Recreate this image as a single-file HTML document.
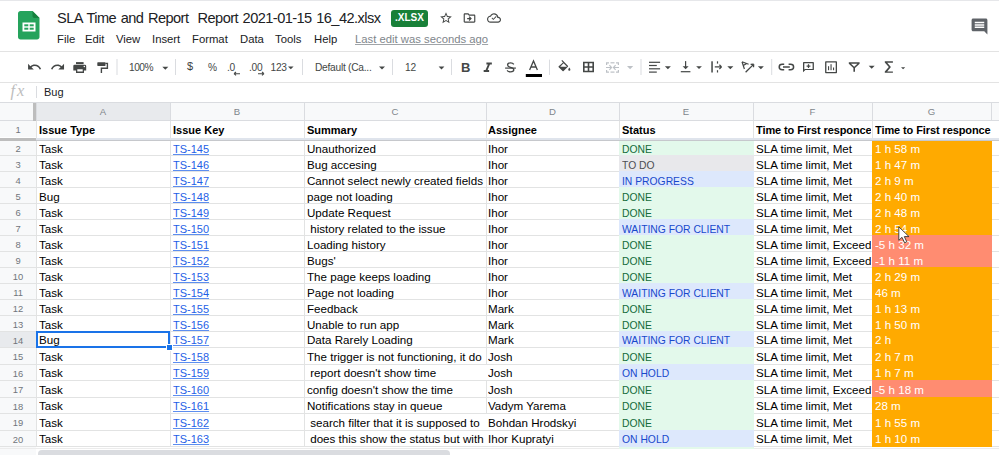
<!DOCTYPE html>
<html><head><meta charset="utf-8">
<style>
*{margin:0;padding:0;box-sizing:border-box}
html,body{width:999px;height:455px;overflow:hidden;background:#fff;font-family:"Liberation Sans",sans-serif;position:relative}
.a{position:absolute}
.title{left:57px;top:10px;font-size:14.6px;color:#202124;white-space:pre;letter-spacing:-0.56px;word-spacing:1.1px}
.menu{top:32.6px;font-size:11.3px;color:#202124;white-space:nowrap}
.ico{position:absolute;fill:#444746}
.tb{position:absolute;font-size:10.2px;color:#444746;white-space:nowrap;letter-spacing:-0.25px}
.sep{position:absolute;top:59px;width:1px;height:17px;background:#dadce0}
.arr{position:absolute;width:0;height:0;border-left:3.5px solid transparent;border-right:3.5px solid transparent;border-top:3.5px solid #444746}
.ch{position:absolute;top:103px;height:18px;font-size:9.6px;line-height:17px;color:#80868b;text-align:center}
.rh{position:absolute;left:0;width:36px;font-size:9.4px;color:#70757a;text-align:center;padding-top:1px}
.hl{position:absolute;left:0;width:999px;height:1px;background:#e2e3e3}
.vl{position:absolute;top:121px;width:1px;height:334px;background:#e2e3e3}
.bg{position:absolute}
.c{position:absolute;font-size:11px;line-height:16px;height:16px;color:#000;white-space:pre;overflow:hidden}
.b{font-weight:bold}
.lk{color:#1f5fe6}
.lk u{text-decoration-thickness:1px;text-underline-offset:0.6px;text-decoration-color:#5d8ef0}
.w{color:#fff}
.st{transform:scaleX(0.915);transform-origin:0 0}
</style></head><body>
<!-- top border -->
<div class="a" style="left:0;top:0;width:999px;height:1px;background:#e6e7ea"></div>
<!-- logo -->
<svg class="a" style="left:18px;top:11px" width="22" height="29" viewBox="0 0 22 29">
 <path d="M2.5 0H14.5L21.5 7V26C21.5 27.4 20.4 28.5 19 28.5H2.5C1.1 28.5 0 27.4 0 26V2.5C0 1.1 1.1 0 2.5 0Z" fill="#25a35c"/>
 <path d="M14.5 0L21.5 7H16.5C15.4 7 14.5 6.1 14.5 5Z" fill="#15803d"/>
 <rect x="4.5" y="11.5" width="13" height="9" fill="#fff"/>
 <rect x="6.3" y="13.3" width="4" height="2" fill="#25a35c"/>
 <rect x="11.7" y="13.3" width="4" height="2" fill="#25a35c"/>
 <rect x="6.3" y="16.7" width="4" height="2" fill="#25a35c"/>
 <rect x="11.7" y="16.7" width="4" height="2" fill="#25a35c"/>
</svg>
<div class="a title">SLA Time and Report  Report 2021-01-15 16_42.xlsx</div>
<div class="a" style="left:391px;top:10px;width:37px;height:16.5px;background:#188038;border-radius:3px;color:#fff;font-size:10px;font-weight:bold;line-height:16.5px;text-align:center">.XLSX</div>
<!-- star -->
<svg class="ico" style="left:439px;top:11px" width="14" height="14" viewBox="0 0 24 24"><path d="M22 9.24l-7.19-.62L12 2 9.19 8.63 2 9.24l5.46 4.73L5.82 21 12 17.27 18.18 21l-1.63-7.03L22 9.24zM12 15.4l-3.76 2.27 1-4.28-3.32-2.88 4.38-.38L12 6.1l1.71 4.04 4.38.38-3.32 2.88 1 4.28L12 15.4z"/></svg>
<!-- move folder -->
<svg class="ico" style="left:462px;top:11px" width="15" height="14" viewBox="0 0 24 24"><path d="M20 6h-8l-2-2H4c-1.1 0-1.99.9-1.99 2L2 18c0 1.1.9 2 2 2h16c1.1 0 2-.9 2-2V8c0-1.1-.9-2-2-2zm0 12H4V6h5.17l2 2H20v10zm-7.84-6H8v2h4.16l-1.59 1.59L11.99 17 16 13.01 11.99 9l-1.41 1.41L12.16 12z"/></svg>
<!-- cloud -->
<svg class="ico" style="left:487px;top:11px" width="14" height="14" viewBox="0 0 24 24"><path d="M19.35 10.04C18.67 6.59 15.64 4 12 4 9.11 4 6.6 5.64 5.35 8.04 2.34 8.36 0 10.91 0 14c0 3.310 2.69 6 6 6h13c2.76 0 5-2.24 5-5 0-2.64-2.05-4.780-4.65-4.96zM19 18H6c-2.21 0-4-1.79-4-4 0-2.05 1.53-3.76 3.56-3.97l1.07-.11.5-.95C8.080 7.140 9.94 6 12 6c2.62 0 4.88 1.86 5.39 4.43l.3 1.5 1.53.11c1.56.1 2.78 1.41 2.78 2.96 0 1.65-1.35 3-3 3zm-8.2-2.6l-3-3 1.1-1.1 1.9 1.9 4.6-4.6 1.1 1.1z"/></svg>
<!-- comment right -->
<svg class="ico" style="left:970px;top:16.5px;fill:#5f6368" width="19" height="19" viewBox="0 0 24 24"><path d="M21.99 4c0-1.1-.89-2-1.99-2H4c-1.1 0-2 .9-2 2v12c0 1.1.9 2 2 2h14l4 4-.01-18zM18 14H6v-2h12v2zm0-3H6V9h12v2zm0-3H6V6h12v2z"/></svg>
<!-- menu -->
<div class="a menu" style="left:57px">File</div>
<div class="a menu" style="left:85px">Edit</div>
<div class="a menu" style="left:116px">View</div>
<div class="a menu" style="left:152px">Insert</div>
<div class="a menu" style="left:192px">Format</div>
<div class="a menu" style="left:240px">Data</div>
<div class="a menu" style="left:275px">Tools</div>
<div class="a menu" style="left:314px">Help</div>
<div class="a menu" style="left:355px;color:#80868b;text-decoration:underline;text-decoration-color:#a0a4a8">Last edit was seconds ago</div>
<!-- header bottom line -->
<div class="a" style="left:0;top:51px;width:999px;height:1px;background:#e3e3e3"></div>
<!-- toolbar -->
<svg class="a" style="left:0;top:52px" width="999" height="30" viewBox="0 52 999 30">
<g fill="#444746">
 <path transform="translate(26.8 59.4) scale(0.638)" d="M12.5 8c-2.65 0-5.05.99-6.9 2.6L2 7v9h9l-3.62-3.62c1.39-1.16 3.16-1.88 5.12-1.88 3.54 0 6.55 2.31 7.6 5.5l2.37-.78C21.08 11.03 17.15 8 12.5 8z"/>
 <path transform="translate(50 59.4) scale(0.638)" d="M18.4 10.6C16.55 8.99 14.15 8 11.5 8c-4.65 0-8.58 3.03-9.96 7.22L3.9 16c1.05-3.19 4.05-5.5 7.6-5.5 1.95 0 3.73.72 5.12 1.88L13 16h9V7l-3.6 3.6z"/>
 <!-- print -->
 <rect x="76" y="62.1" width="7.6" height="2"/>
 <path d="M74.6 64.8H84.9Q86.2 64.8 86.2 66.1V70.5H84V72.9H76V70.5H73.3V66.1Q73.3 64.8 74.6 64.8ZM77.3 69.3V71.5H82.7V69.3Z"/>
 <circle cx="84.3" cy="66.6" r="0.75" fill="#fff"/>
 <!-- paint roller -->
 <rect x="97.3" y="62.3" width="8.2" height="3.6" rx="0.6"/>
 <path d="M105.3 63.4H107.4V68.2H101.4V72.9" fill="none" stroke="#444746" stroke-width="1.4"/>
 <!-- $ -->
 <!-- .0 arrow -->
 <path d="M234 73.7H240M234 73.7L236 72M234 73.7L236 75.4" stroke="#444746" stroke-width="1.1" fill="none"/>
 <path d="M258 73.7H264M264 73.7L262 72M264 73.7L262 75.4" stroke="#444746" stroke-width="1.1" fill="none"/>
 <!-- dropdown arrows -->
 <path d="M162.3 66.7H168.3L165.3 69.7Z"/>
 <path d="M288 66.4H293.6L290.8 69.2Z"/>
 <path d="M379 66.5H385L382 69.5Z"/>
 <path d="M438.6 66.5H444.4L441.5 69.5Z"/>
 <path transform="translate(479.6 59.8) scale(0.68)" d="M10 4v3h2.21l-3.42 8H6v3h8v-3h-2.21l3.42-8H18V4z"/>
 <!-- strikethrough S -->
 <path d="M513.8 64.3C513.1 63.3 512 62.9 510.6 62.9C508.8 62.9 507.6 63.8 507.6 65C507.6 66.2 508.6 66.8 510.6 67.3C512.7 67.8 513.8 68.5 513.8 69.8C513.8 71.2 512.5 71.9 510.6 71.9C509 71.9 507.8 71.3 507.1 70.3" fill="none" stroke="#444746" stroke-width="1.3"/>
 <rect x="505.1" y="67.5" width="10.8" height="1.2"/>
 <!-- A -->
 <path d="M529.6 70.1L533.5 60.9L537.4 70.1M531 67H536" fill="none" stroke="#444746" stroke-width="1.3"/>
 <rect x="525.8" y="74" width="16.2" height="3" fill="#000"/>
 <!-- paint bucket -->
 <path d="M562.2 60L561.4 60.8L563 62.4L558.7 66.3Q558.2 66.8 558.7 67.3L562.6 71Q563.1 71.5 563.6 71L567.9 66.8Q568.4 66.3 567.9 65.8Z M560.2 66.8L563.6 63.2L567 66.8Z"/>
 <path d="M569.4 67.5Q568.2 69 568.2 69.7Q568.2 70.7 569.4 70.7Q570.4 70.7 570.4 69.7Q570.4 69 569.4 67.5Z"/>
 <!-- borders -->
 <path d="M583 61.7H594V72.3H583ZM584.6 63.3V66.2H587.7V63.3ZM589.3 63.3V66.2H592.4V63.3ZM584.6 67.8V70.7H587.7V67.8ZM589.3 67.8V70.7H592.4V67.8Z" fill-rule="evenodd"/>
 <!-- merge (disabled) -->
 <g fill="#bdc1c6">
  <path d="M606 62.2H609V63.4H607.2V65H606ZM616 62.2H619V65H617.8V63.4H616ZM606 69.9H607.2V71.5H609V72.7H606ZM617.8 69.9H619V72.7H616V71.5H617.8Z"/>
  <rect x="610.5" y="62.2" width="4" height="1.2"/><rect x="610.5" y="71.5" width="4" height="1.2"/>
  <path d="M606 66.9H610.3L609 65.6L609.8 64.8L612.4 67.5L609.8 70.2L609 69.4L610.3 68.1H606Z"/>
  <path d="M619 66.9H614.7L616 65.6L615.2 64.8L612.6 67.5L615.2 70.2L616 69.4L614.7 68.1H619Z"/>
  <path d="M627 66.1H633.2L630.1 69.2Z"/>
 </g>
 <!-- align left -->
 <rect x="649" y="61.7" width="11.1" height="1.2"/>
 <rect x="649" y="64.9" width="7.8" height="1.2"/>
 <rect x="649" y="68.2" width="11.1" height="1.2"/>
 <rect x="649" y="71.5" width="7.8" height="1.2"/>
 <path d="M664.9 66.2H670.9L667.9 69.2Z"/>
 <!-- valign bottom -->
 <rect x="685" y="61.1" width="1.2" height="6"/>
 <path d="M682.6 66.2H688.6L685.6 69.2Z"/>
 <rect x="680.8" y="71.1" width="9.6" height="1.2"/>
 <path d="M696.2 66.2H701.9L699 69.1Z"/>
 <!-- wrap -->
 <rect x="711.3" y="61.3" width="1.5" height="11.2"/>
 <rect x="716.9" y="61.3" width="1.2" height="2.3"/><rect x="716.9" y="70.2" width="1.2" height="2.3"/>
 <path d="M714.8 66.9H721.2M721.6 66.9L719.4 64.8M721.6 66.9L719.4 69" fill="none" stroke="#444746" stroke-width="1.2"/>
 <path d="M727.3 66.2H733.4L730.3 69.2Z"/>
 <!-- text rotation -->
 <path d="M742 61.8L748.6 64.2M742 61.8L744.4 69M743.3 65.6L746.6 63.4" fill="none" stroke="#444746" stroke-width="1.2"/>
 <path d="M745.6 72.3L753.3 64.6M753.7 64.1L750.6 64.3M753.7 64.1L753.5 67.2" fill="none" stroke="#444746" stroke-width="1.3"/>
 <path d="M757.9 66.2H763.9L760.9 69.2Z"/>
 <!-- link -->
 <path d="M784.2 64.3H782.2Q779.2 64.3 779.2 67Q779.2 69.7 782.2 69.7H784.2M788.6 64.3H790.6Q793.6 64.3 793.6 67Q793.6 69.7 790.6 69.7H788.6M783 67H789.8" fill="none" stroke="#444746" stroke-width="1.5"/>
 <!-- add comment -->
 <path d="M803.7 62H813.2Q813.9 62 813.9 62.7V69.4Q813.9 70.1 813.2 70.1H805.4L803 72.3V62.7Q803 62 803.7 62ZM804.3 63.3V69.5L804.9 68.9H812.6V63.3Z" fill-rule="evenodd"/>
 <path d="M807.9 64.2H809.1V65.5H810.4V66.7H809.1V68H807.9V66.7H806.6V65.5H807.9Z"/>
 <!-- chart -->
 <path d="M825.8 61.3H836.3Q837 61.3 837 62V72.5Q837 73.2 836.3 73.2H825.8Q825.1 73.2 825.1 72.5V62Q825.1 61.3 825.8 61.3ZM826.4 62.6V71.9H835.7V62.6Z" fill-rule="evenodd"/>
 <rect x="828" y="66.2" width="1.1" height="4"/><rect x="830.5" y="64.2" width="1.1" height="6"/><rect x="833" y="67.5" width="1.1" height="2.7"/>
 <!-- filter -->
 <path d="M848.8 62.3H859.6V63.8L855 68V71.8H853.4V68L848.8 63.8ZM851 63.8L854.2 66.7L857.4 63.8Z" fill-rule="evenodd"/>
 <path d="M868.7 65.8H874.7L871.7 68.8Z"/>
 <!-- sigma -->
 <path d="M884.8 61.3H892.9V62.7H887.2L890.9 67L887.2 71.4H892.9V72.8H884.8V71.6L888.8 67L884.8 62.5Z"/>
 <path d="M901 67.2H905.2L903.1 69.3Z"/>
</g>
<g fill="#dadce0">
 <rect x="116.5" y="59" width="1" height="16"/>
 <rect x="175" y="59" width="1" height="16"/>
 <rect x="302" y="59" width="1" height="16"/>
 <rect x="392" y="59" width="1" height="16"/>
 <rect x="451" y="59" width="1" height="16"/>
 <rect x="549" y="59.6" width="1" height="15.3"/>
 <rect x="640.5" y="59" width="1" height="16"/>
 <rect x="771.2" y="59" width="1" height="16"/>
</g>
</svg>
<div class="tb" style="left:129px;top:61.6px;letter-spacing:-0.5px">100%</div>
<div class="tb" style="left:187px;top:60px;font-size:11px;color:#3c4043">$</div>
<div class="tb" style="left:208px;top:61.6px">%</div>
<div class="tb" style="left:227px;top:61.6px">.0</div>
<div class="tb" style="left:249px;top:61.6px">.00</div>
<div class="tb" style="left:270.5px;top:61.6px">123</div>
<div class="tb" style="left:315px;top:61.6px">Default (Ca...</div>
<div class="tb" style="left:405px;top:61.6px">12</div>
<div class="tb" style="left:461px;top:59.5px;font-weight:bold;font-size:13px">B</div>

<div class="a" style="left:0;top:82px;width:999px;height:1px;background:#e3e3e3"></div>
<!-- formula bar -->
<div class="a" style="left:10.5px;top:80.5px;font-family:'Liberation Serif',serif;font-style:italic;font-size:16.5px;letter-spacing:1.8px;color:#bdbdbd">fx</div>
<div class="a" style="left:36px;top:86px;width:1px;height:12px;background:#dadce0"></div>
<div class="a" style="left:44px;top:86px;font-size:11px;color:#202124">Bug</div>
<div class="a" style="left:0;top:102px;width:999px;height:1px;background:#dadce0"></div>
<!-- grid -->
<div class="a" style="left:0;top:103px;width:33px;height:18px;background:#f8f9fa"></div>
<div class="ch" style="left:36px;width:134px;background:#e8eaed">A</div>
<div class="ch" style="left:170px;width:134px;background:#f8f9fa">B</div>
<div class="ch" style="left:304px;width:182px;background:#f8f9fa">C</div>
<div class="ch" style="left:486px;width:133px;background:#f8f9fa">D</div>
<div class="ch" style="left:619px;width:134px;background:#f8f9fa">E</div>
<div class="ch" style="left:753px;width:119px;background:#f8f9fa">F</div>
<div class="ch" style="left:872px;width:119px;background:#f8f9fa">G</div>
<div class="ch" style="left:991px;width:40px;background:#f8f9fa"></div>
<div class="hl" style="top:155px"></div>
<div class="hl" style="top:171px"></div>
<div class="hl" style="top:187px"></div>
<div class="hl" style="top:203px"></div>
<div class="hl" style="top:219px"></div>
<div class="hl" style="top:235px"></div>
<div class="hl" style="top:251px"></div>
<div class="hl" style="top:267px"></div>
<div class="hl" style="top:283px"></div>
<div class="hl" style="top:299px"></div>
<div class="hl" style="top:315px"></div>
<div class="hl" style="top:331px"></div>
<div class="hl" style="top:347px"></div>
<div class="hl" style="top:364px"></div>
<div class="hl" style="top:380px"></div>
<div class="hl" style="top:397px"></div>
<div class="hl" style="top:413px"></div>
<div class="hl" style="top:430px"></div>
<div class="hl" style="top:446px"></div>
<div class="vl" style="left:36px"></div>
<div class="a" style="left:36px;top:103px;width:1px;height:18px;background:#dadce0"></div>
<div class="vl" style="left:170px"></div>
<div class="a" style="left:170px;top:103px;width:1px;height:18px;background:#dadce0"></div>
<div class="vl" style="left:304px"></div>
<div class="a" style="left:304px;top:103px;width:1px;height:18px;background:#dadce0"></div>
<div class="vl" style="left:486px;top:121px;height:244px"></div>
<div class="vl" style="left:486px;top:380px;height:34px"></div>
<div class="vl" style="left:486px;top:446px;height:10px"></div>
<div class="a" style="left:486px;top:103px;width:1px;height:18px;background:#dadce0"></div>
<div class="vl" style="left:619px"></div>
<div class="a" style="left:619px;top:103px;width:1px;height:18px;background:#dadce0"></div>
<div class="vl" style="left:753px"></div>
<div class="a" style="left:753px;top:103px;width:1px;height:18px;background:#dadce0"></div>
<div class="vl" style="left:872px"></div>
<div class="a" style="left:872px;top:103px;width:1px;height:18px;background:#dadce0"></div>
<div class="vl" style="left:991px;top:140px;height:315px"></div>
<div class="a" style="left:991px;top:103px;width:1px;height:18px;background:#dadce0"></div>
<div class="bg" style="left:619px;top:139px;width:135px;height:17px;background:#e3f9eb"></div>
<div class="bg" style="left:872px;top:139px;width:120px;height:17px;background:#ffaa00"></div>
<div class="bg" style="left:619px;top:155px;width:135px;height:17px;background:#e8e8eb"></div>
<div class="bg" style="left:872px;top:155px;width:120px;height:17px;background:#ffaa00"></div>
<div class="bg" style="left:619px;top:171px;width:135px;height:17px;background:#dde8fc"></div>
<div class="bg" style="left:872px;top:171px;width:120px;height:17px;background:#ffaa00"></div>
<div class="bg" style="left:619px;top:187px;width:135px;height:17px;background:#e3f9eb"></div>
<div class="bg" style="left:872px;top:187px;width:120px;height:17px;background:#ffaa00"></div>
<div class="bg" style="left:619px;top:203px;width:135px;height:17px;background:#e3f9eb"></div>
<div class="bg" style="left:872px;top:203px;width:120px;height:17px;background:#ffaa00"></div>
<div class="bg" style="left:619px;top:219px;width:135px;height:17px;background:#dde8fc"></div>
<div class="bg" style="left:872px;top:219px;width:120px;height:17px;background:#ffaa00"></div>
<div class="bg" style="left:619px;top:235px;width:135px;height:17px;background:#e3f9eb"></div>
<div class="bg" style="left:872px;top:235px;width:120px;height:17px;background:#ff8c71"></div>
<div class="bg" style="left:619px;top:251px;width:135px;height:17px;background:#e3f9eb"></div>
<div class="bg" style="left:872px;top:251px;width:120px;height:17px;background:#ff8c71"></div>
<div class="bg" style="left:619px;top:267px;width:135px;height:17px;background:#e3f9eb"></div>
<div class="bg" style="left:872px;top:267px;width:120px;height:17px;background:#ffaa00"></div>
<div class="bg" style="left:619px;top:283px;width:135px;height:17px;background:#dde8fc"></div>
<div class="bg" style="left:872px;top:283px;width:120px;height:17px;background:#ffaa00"></div>
<div class="bg" style="left:619px;top:299px;width:135px;height:17px;background:#e3f9eb"></div>
<div class="bg" style="left:872px;top:299px;width:120px;height:17px;background:#ffaa00"></div>
<div class="bg" style="left:619px;top:315px;width:135px;height:17px;background:#e3f9eb"></div>
<div class="bg" style="left:872px;top:315px;width:120px;height:17px;background:#ffaa00"></div>
<div class="bg" style="left:619px;top:331px;width:135px;height:17px;background:#dde8fc"></div>
<div class="bg" style="left:872px;top:331px;width:120px;height:17px;background:#ffaa00"></div>
<div class="bg" style="left:619px;top:347px;width:135px;height:18px;background:#e3f9eb"></div>
<div class="bg" style="left:872px;top:347px;width:120px;height:18px;background:#ffaa00"></div>
<div class="bg" style="left:619px;top:364px;width:135px;height:17px;background:#dde8fc"></div>
<div class="bg" style="left:872px;top:364px;width:120px;height:17px;background:#ffaa00"></div>
<div class="bg" style="left:619px;top:380px;width:135px;height:18px;background:#e3f9eb"></div>
<div class="bg" style="left:872px;top:380px;width:120px;height:18px;background:#ff8c71"></div>
<div class="bg" style="left:619px;top:397px;width:135px;height:17px;background:#e3f9eb"></div>
<div class="bg" style="left:872px;top:397px;width:120px;height:17px;background:#ffaa00"></div>
<div class="bg" style="left:619px;top:413px;width:135px;height:18px;background:#e3f9eb"></div>
<div class="bg" style="left:872px;top:413px;width:120px;height:18px;background:#ffaa00"></div>
<div class="bg" style="left:619px;top:430px;width:135px;height:17px;background:#dde8fc"></div>
<div class="bg" style="left:872px;top:430px;width:120px;height:17px;background:#ffaa00"></div>
<div class="rh" style="top:121px;height:16px;line-height:16px;background:#f8f9fa">1</div>
<div class="rh" style="top:140px;height:15px;line-height:15px;background:#f8f9fa">2</div>
<div class="rh" style="top:156px;height:15px;line-height:15px;background:#f8f9fa">3</div>
<div class="rh" style="top:172px;height:15px;line-height:15px;background:#f8f9fa">4</div>
<div class="rh" style="top:188px;height:15px;line-height:15px;background:#f8f9fa">5</div>
<div class="rh" style="top:204px;height:15px;line-height:15px;background:#f8f9fa">6</div>
<div class="rh" style="top:220px;height:15px;line-height:15px;background:#f8f9fa">7</div>
<div class="rh" style="top:236px;height:15px;line-height:15px;background:#f8f9fa">8</div>
<div class="rh" style="top:252px;height:15px;line-height:15px;background:#f8f9fa">9</div>
<div class="rh" style="top:268px;height:15px;line-height:15px;background:#f8f9fa">10</div>
<div class="rh" style="top:284px;height:15px;line-height:15px;background:#f8f9fa">11</div>
<div class="rh" style="top:300px;height:15px;line-height:15px;background:#f8f9fa">12</div>
<div class="rh" style="top:316px;height:15px;line-height:15px;background:#f8f9fa">13</div>
<div class="rh" style="top:332px;height:15px;line-height:15px;background:#e8eaed">14</div>
<div class="rh" style="top:348px;height:16px;line-height:16px;background:#f8f9fa">15</div>
<div class="rh" style="top:365px;height:15px;line-height:15px;background:#f8f9fa">16</div>
<div class="rh" style="top:381px;height:16px;line-height:16px;background:#f8f9fa">17</div>
<div class="rh" style="top:398px;height:15px;line-height:15px;background:#f8f9fa">18</div>
<div class="rh" style="top:414px;height:16px;line-height:16px;background:#f8f9fa">19</div>
<div class="rh" style="top:431px;height:15px;line-height:15px;background:#f8f9fa">20</div>
<div class="c b" style="left:39px;top:122.19px;width:130px;font-size:11px;">Issue Type</div>
<div class="c b" style="left:173px;top:122.19px;width:130px;font-size:11px;">Issue Key</div>
<div class="c b" style="left:307px;top:122.19px;width:178px;font-size:11px;">Summary</div>
<div class="c b" style="left:488px;top:122.19px;width:130px;font-size:11px;">Assignee</div>
<div class="c b" style="left:622px;top:122.19px;width:130px;font-size:11px;">Status</div>
<div class="c b" style="left:756px;top:122.19px;width:115px;font-size:11px;letter-spacing:-0.1px">Time to First responce</div>
<div class="c b" style="left:875px;top:122.19px;width:164px;font-size:11px;letter-spacing:-0.1px">Time to First responce</div>
<div class="c" style="left:39px;top:141.48px;width:130px;font-size:11.6px;">Task</div>
<div class="c lk" style="left:173px;top:141.19px;width:130px;font-size:11px;"><u>TS-145</u></div>
<div class="c" style="left:307px;top:141.48px;width:178px;font-size:11.6px;">Unauthorized</div>
<div class="c" style="left:488px;top:141.48px;width:130px;font-size:11.6px;">Ihor</div>
<div class="c st" style="left:622px;top:141.28px;width:130px;font-size:11.3px;color:#136b3b">DONE</div>
<div class="c" style="left:756px;top:141.48px;width:115px;font-size:11.6px;">SLA time limit, Met</div>
<div class="c w" style="left:875px;top:141.48px;width:164px;font-size:11.6px;">1 h 58 m</div>
<div class="c" style="left:39px;top:157.48px;width:130px;font-size:11.6px;">Task</div>
<div class="c lk" style="left:173px;top:157.19px;width:130px;font-size:11px;"><u>TS-146</u></div>
<div class="c" style="left:307px;top:157.48px;width:178px;font-size:11.6px;">Bug accesing</div>
<div class="c" style="left:488px;top:157.48px;width:130px;font-size:11.6px;">Ihor</div>
<div class="c st" style="left:622px;top:157.28px;width:130px;font-size:11.3px;color:#4d4f53">TO DO</div>
<div class="c" style="left:756px;top:157.48px;width:115px;font-size:11.6px;">SLA time limit, Met</div>
<div class="c w" style="left:875px;top:157.48px;width:164px;font-size:11.6px;">1 h 47 m</div>
<div class="c" style="left:39px;top:173.48px;width:130px;font-size:11.6px;">Task</div>
<div class="c lk" style="left:173px;top:173.19px;width:130px;font-size:11px;"><u>TS-147</u></div>
<div class="c" style="left:307px;top:173.48px;width:178px;font-size:11.6px;">Cannot select newly created fields</div>
<div class="c" style="left:488px;top:173.48px;width:130px;font-size:11.6px;">Ihor</div>
<div class="c st" style="left:622px;top:173.28px;width:130px;font-size:11.3px;color:#1848cc">IN PROGRESS</div>
<div class="c" style="left:756px;top:173.48px;width:115px;font-size:11.6px;">SLA time limit, Met</div>
<div class="c w" style="left:875px;top:173.48px;width:164px;font-size:11.6px;">2 h 9 m</div>
<div class="c" style="left:39px;top:189.48px;width:130px;font-size:11.6px;">Bug</div>
<div class="c lk" style="left:173px;top:189.19px;width:130px;font-size:11px;"><u>TS-148</u></div>
<div class="c" style="left:307px;top:189.48px;width:178px;font-size:11.6px;">page not loading</div>
<div class="c" style="left:488px;top:189.48px;width:130px;font-size:11.6px;">Ihor</div>
<div class="c st" style="left:622px;top:189.28px;width:130px;font-size:11.3px;color:#136b3b">DONE</div>
<div class="c" style="left:756px;top:189.48px;width:115px;font-size:11.6px;">SLA time limit, Met</div>
<div class="c w" style="left:875px;top:189.48px;width:164px;font-size:11.6px;">2 h 40 m</div>
<div class="c" style="left:39px;top:205.48px;width:130px;font-size:11.6px;">Task</div>
<div class="c lk" style="left:173px;top:205.19px;width:130px;font-size:11px;"><u>TS-149</u></div>
<div class="c" style="left:307px;top:205.48px;width:178px;font-size:11.6px;">Update Request</div>
<div class="c" style="left:488px;top:205.48px;width:130px;font-size:11.6px;">Ihor</div>
<div class="c st" style="left:622px;top:205.28px;width:130px;font-size:11.3px;color:#136b3b">DONE</div>
<div class="c" style="left:756px;top:205.48px;width:115px;font-size:11.6px;">SLA time limit, Met</div>
<div class="c w" style="left:875px;top:205.48px;width:164px;font-size:11.6px;">2 h 48 m</div>
<div class="c" style="left:39px;top:221.48px;width:130px;font-size:11.6px;">Task</div>
<div class="c lk" style="left:173px;top:221.19px;width:130px;font-size:11px;"><u>TS-150</u></div>
<div class="c" style="left:307px;top:221.48px;width:178px;font-size:11.6px;">&nbsp;history related to the issue</div>
<div class="c" style="left:488px;top:221.48px;width:130px;font-size:11.6px;">Ihor</div>
<div class="c st" style="left:622px;top:221.28px;width:130px;font-size:11.3px;color:#1848cc">WAITING FOR CLIENT</div>
<div class="c" style="left:756px;top:221.48px;width:115px;font-size:11.6px;">SLA time limit, Met</div>
<div class="c w" style="left:875px;top:221.48px;width:164px;font-size:11.6px;">2 h 54 m</div>
<div class="c" style="left:39px;top:237.48px;width:130px;font-size:11.6px;">Task</div>
<div class="c lk" style="left:173px;top:237.19px;width:130px;font-size:11px;"><u>TS-151</u></div>
<div class="c" style="left:307px;top:237.48px;width:178px;font-size:11.6px;">Loading history</div>
<div class="c" style="left:488px;top:237.48px;width:130px;font-size:11.6px;">Ihor</div>
<div class="c st" style="left:622px;top:237.28px;width:130px;font-size:11.3px;color:#136b3b">DONE</div>
<div class="c" style="left:756px;top:237.48px;width:115px;font-size:11.6px;">SLA time limit, Exceeded</div>
<div class="c w" style="left:875px;top:237.48px;width:164px;font-size:11.6px;">-5 h 32 m</div>
<div class="c" style="left:39px;top:253.48px;width:130px;font-size:11.6px;">Task</div>
<div class="c lk" style="left:173px;top:253.19px;width:130px;font-size:11px;"><u>TS-152</u></div>
<div class="c" style="left:307px;top:253.48px;width:178px;font-size:11.6px;">Bugs'</div>
<div class="c" style="left:488px;top:253.48px;width:130px;font-size:11.6px;">Ihor</div>
<div class="c st" style="left:622px;top:253.28px;width:130px;font-size:11.3px;color:#136b3b">DONE</div>
<div class="c" style="left:756px;top:253.48px;width:115px;font-size:11.6px;">SLA time limit, Exceeded</div>
<div class="c w" style="left:875px;top:253.48px;width:164px;font-size:11.6px;">-1 h 11 m</div>
<div class="c" style="left:39px;top:269.48px;width:130px;font-size:11.6px;">Task</div>
<div class="c lk" style="left:173px;top:269.19px;width:130px;font-size:11px;"><u>TS-153</u></div>
<div class="c" style="left:307px;top:269.48px;width:178px;font-size:11.6px;">The page keeps loading</div>
<div class="c" style="left:488px;top:269.48px;width:130px;font-size:11.6px;">Ihor</div>
<div class="c st" style="left:622px;top:269.28px;width:130px;font-size:11.3px;color:#136b3b">DONE</div>
<div class="c" style="left:756px;top:269.48px;width:115px;font-size:11.6px;">SLA time limit, Met</div>
<div class="c w" style="left:875px;top:269.48px;width:164px;font-size:11.6px;">2 h 29 m</div>
<div class="c" style="left:39px;top:285.48px;width:130px;font-size:11.6px;">Task</div>
<div class="c lk" style="left:173px;top:285.19px;width:130px;font-size:11px;"><u>TS-154</u></div>
<div class="c" style="left:307px;top:285.48px;width:178px;font-size:11.6px;">Page not loading</div>
<div class="c" style="left:488px;top:285.48px;width:130px;font-size:11.6px;">Ihor</div>
<div class="c st" style="left:622px;top:285.28px;width:130px;font-size:11.3px;color:#1848cc">WAITING FOR CLIENT</div>
<div class="c" style="left:756px;top:285.48px;width:115px;font-size:11.6px;">SLA time limit, Met</div>
<div class="c w" style="left:875px;top:285.48px;width:164px;font-size:11.6px;">46 m</div>
<div class="c" style="left:39px;top:301.48px;width:130px;font-size:11.6px;">Task</div>
<div class="c lk" style="left:173px;top:301.19px;width:130px;font-size:11px;"><u>TS-155</u></div>
<div class="c" style="left:307px;top:301.48px;width:178px;font-size:11.6px;">Feedback</div>
<div class="c" style="left:488px;top:301.48px;width:130px;font-size:11.6px;">Mark</div>
<div class="c st" style="left:622px;top:301.28px;width:130px;font-size:11.3px;color:#136b3b">DONE</div>
<div class="c" style="left:756px;top:301.48px;width:115px;font-size:11.6px;">SLA time limit, Met</div>
<div class="c w" style="left:875px;top:301.48px;width:164px;font-size:11.6px;">1 h 13 m</div>
<div class="c" style="left:39px;top:317.48px;width:130px;font-size:11.6px;">Task</div>
<div class="c lk" style="left:173px;top:317.19px;width:130px;font-size:11px;"><u>TS-156</u></div>
<div class="c" style="left:307px;top:317.48px;width:178px;font-size:11.6px;">Unable to run app</div>
<div class="c" style="left:488px;top:317.48px;width:130px;font-size:11.6px;">Mark</div>
<div class="c st" style="left:622px;top:317.28px;width:130px;font-size:11.3px;color:#136b3b">DONE</div>
<div class="c" style="left:756px;top:317.48px;width:115px;font-size:11.6px;">SLA time limit, Met</div>
<div class="c w" style="left:875px;top:317.48px;width:164px;font-size:11.6px;">1 h 50 m</div>
<div class="c" style="left:39px;top:332.48px;width:130px;font-size:11.6px;">Bug</div>
<div class="c lk" style="left:173px;top:332.19px;width:130px;font-size:11px;"><u>TS-157</u></div>
<div class="c" style="left:307px;top:332.48px;width:178px;font-size:11.6px;">Data Rarely Loading</div>
<div class="c" style="left:488px;top:332.48px;width:130px;font-size:11.6px;">Mark</div>
<div class="c st" style="left:622px;top:332.28px;width:130px;font-size:11.3px;color:#1848cc">WAITING FOR CLIENT</div>
<div class="c" style="left:756px;top:332.48px;width:115px;font-size:11.6px;">SLA time limit, Met</div>
<div class="c w" style="left:875px;top:332.48px;width:164px;font-size:11.6px;">2 h</div>
<div class="c" style="left:39px;top:349.48px;width:130px;font-size:11.6px;">Task</div>
<div class="c lk" style="left:173px;top:349.19px;width:130px;font-size:11px;"><u>TS-158</u></div>
<div class="c" style="left:307px;top:349.48px;width:178px;font-size:11.6px;">The trigger is not functioning, it do</div>
<div class="c" style="left:488px;top:349.48px;width:130px;font-size:11.6px;">Josh</div>
<div class="c st" style="left:622px;top:349.28px;width:130px;font-size:11.3px;color:#136b3b">DONE</div>
<div class="c" style="left:756px;top:349.48px;width:115px;font-size:11.6px;">SLA time limit, Met</div>
<div class="c w" style="left:875px;top:349.48px;width:164px;font-size:11.6px;">2 h 7 m</div>
<div class="c" style="left:39px;top:365.48px;width:130px;font-size:11.6px;">Task</div>
<div class="c lk" style="left:173px;top:365.19px;width:130px;font-size:11px;"><u>TS-159</u></div>
<div class="c" style="left:307px;top:365.48px;width:178px;font-size:11.6px;">&nbsp;report doesn't show time</div>
<div class="c" style="left:488px;top:365.48px;width:130px;font-size:11.6px;">Josh</div>
<div class="c st" style="left:622px;top:365.28px;width:130px;font-size:11.3px;color:#1848cc">ON HOLD</div>
<div class="c" style="left:756px;top:365.48px;width:115px;font-size:11.6px;">SLA time limit, Met</div>
<div class="c w" style="left:875px;top:365.48px;width:164px;font-size:11.6px;">1 h 7 m</div>
<div class="c" style="left:39px;top:382.48px;width:130px;font-size:11.6px;">Task</div>
<div class="c lk" style="left:173px;top:382.19px;width:130px;font-size:11px;"><u>TS-160</u></div>
<div class="c" style="left:307px;top:382.48px;width:178px;font-size:11.6px;">config doesn't show the time</div>
<div class="c" style="left:488px;top:382.48px;width:130px;font-size:11.6px;">Josh</div>
<div class="c st" style="left:622px;top:382.28px;width:130px;font-size:11.3px;color:#136b3b">DONE</div>
<div class="c" style="left:756px;top:382.48px;width:115px;font-size:11.6px;">SLA time limit, Exceeded</div>
<div class="c w" style="left:875px;top:382.48px;width:164px;font-size:11.6px;">-5 h 18 m</div>
<div class="c" style="left:39px;top:398.48px;width:130px;font-size:11.6px;">Task</div>
<div class="c lk" style="left:173px;top:398.19px;width:130px;font-size:11px;"><u>TS-161</u></div>
<div class="c" style="left:307px;top:398.48px;width:178px;font-size:11.6px;">Notifications stay in queue</div>
<div class="c" style="left:488px;top:398.48px;width:130px;font-size:11.6px;">Vadym Yarema</div>
<div class="c st" style="left:622px;top:398.28px;width:130px;font-size:11.3px;color:#136b3b">DONE</div>
<div class="c" style="left:756px;top:398.48px;width:115px;font-size:11.6px;">SLA time limit, Met</div>
<div class="c w" style="left:875px;top:398.48px;width:164px;font-size:11.6px;">28 m</div>
<div class="c" style="left:39px;top:415.48px;width:130px;font-size:11.6px;">Task</div>
<div class="c lk" style="left:173px;top:415.19px;width:130px;font-size:11px;"><u>TS-162</u></div>
<div class="c" style="left:307px;top:415.48px;width:178px;font-size:11.6px;">&nbsp;search filter that it is supposed to</div>
<div class="c" style="left:488px;top:415.48px;width:130px;font-size:11.6px;">Bohdan Hrodskyi</div>
<div class="c st" style="left:622px;top:415.28px;width:130px;font-size:11.3px;color:#136b3b">DONE</div>
<div class="c" style="left:756px;top:415.48px;width:115px;font-size:11.6px;">SLA time limit, Met</div>
<div class="c w" style="left:875px;top:415.48px;width:164px;font-size:11.6px;">1 h 55 m</div>
<div class="c" style="left:39px;top:431.48px;width:130px;font-size:11.6px;">Task</div>
<div class="c lk" style="left:173px;top:431.19px;width:130px;font-size:11px;"><u>TS-163</u></div>
<div class="c" style="left:307px;top:431.48px;width:178px;font-size:11.6px;">&nbsp;does this show the status but with</div>
<div class="c" style="left:488px;top:431.48px;width:130px;font-size:11.6px;">Ihor Kupratyi</div>
<div class="c st" style="left:622px;top:431.28px;width:130px;font-size:11.3px;color:#1848cc">ON HOLD</div>
<div class="c" style="left:756px;top:431.48px;width:115px;font-size:11.6px;">SLA time limit, Met</div>
<div class="c w" style="left:875px;top:431.48px;width:164px;font-size:11.6px;">1 h 10 m</div>
<!-- header bottom line -->
<div class="a" style="left:0;top:120px;width:999px;height:1px;background:#dadce0"></div>
<!-- frozen bars -->
<div class="a" style="left:33px;top:103px;width:3px;height:18px;background:#bdbdbd"></div>
<div class="a" style="left:0;top:137.5px;width:36px;height:3px;background:#bdbdbd"></div>
<div class="a" style="left:36px;top:138px;width:963px;height:2px;background:#dfe4ec"></div>
<div class="a" style="left:36px;top:140px;width:963px;height:1px;background:#c6c8cc"></div>
<!-- selection -->
<div class="a" style="left:36px;top:331px;width:134px;height:17px;border:2px solid #1a73e8"></div>
<div class="a" style="left:166px;top:344px;width:7px;height:7px;background:#1a73e8;border:1px solid #fff"></div>
<!-- bottom scrollbar -->
<div class="a" style="left:0;top:447px;width:999px;height:8px;background:#fff"></div>
<div class="a" style="left:0;top:447px;width:36px;height:8px;background:#f8f9fa"></div>
<div class="a" style="left:0;top:448px;width:999px;height:1px;background:#ececec"></div>
<div class="a" style="left:619px;top:447px;width:135px;height:1.5px;background:#e3f9eb"></div>
<div class="a" style="left:37.5px;top:449.7px;width:412px;height:9px;background:#dadce0;border-radius:4px"></div>
<!-- cursor -->
<svg class="a" style="left:897.5px;top:226.3px" width="14" height="18" viewBox="0 0 14 18"><path d="M0.8 0.8V14.3L4 11.3L6.6 16.8L8.8 15.8L6.3 10.6H11Z" fill="#fff" stroke="#333" stroke-width="0.9" stroke-linejoin="round"/></svg>
</body></html>
